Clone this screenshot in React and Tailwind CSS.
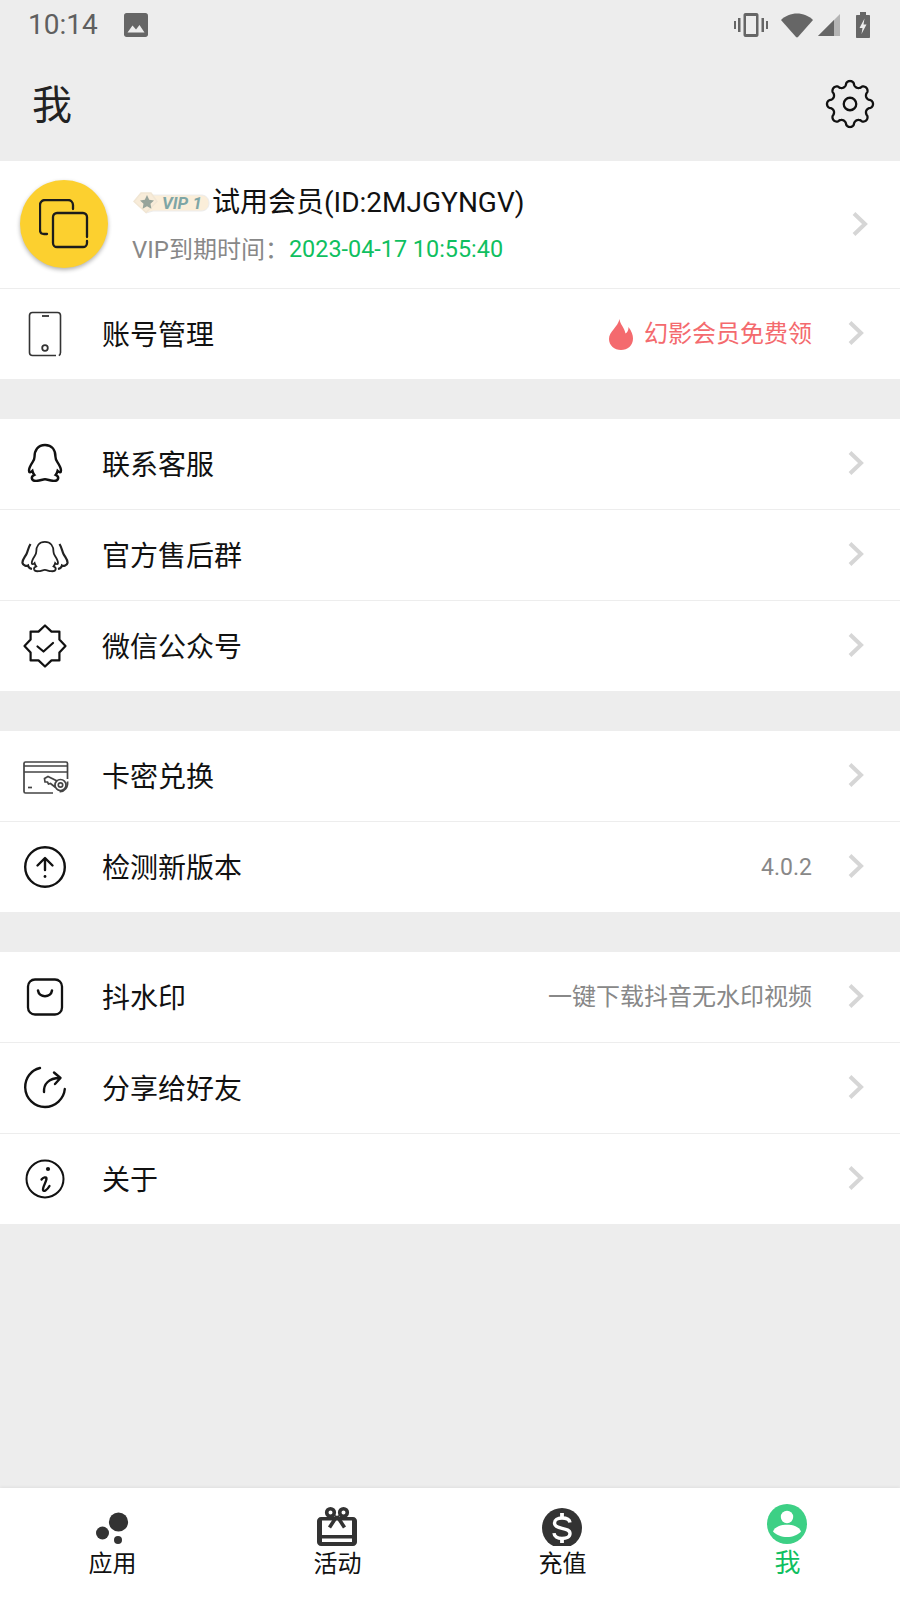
import React from "react";

// gear outline, scalloped edge
const gearPath = (() => {
  const pts = [];
  for (let i = 0; i < 240; i++) {
    const a = (i / 240) * Math.PI * 2;
    const wave = Math.cos(8 * a);
    const r = 19.5 + 2.6 * Math.sign(wave) * Math.pow(Math.abs(wave), 0.6);
    pts.push(`${(24 + r * Math.sin(a)).toFixed(2)} ${(24 - r * Math.cos(a)).toFixed(2)}`);
  }
  return "M" + pts.join("L") + "Z";
})();

const Chevron = ({ className }) => (
  <svg width="16" height="24" viewBox="0 0 16 24" className={className} fill="none" stroke="#d6d6d6" strokeWidth="4">
    <path d="M2 1.5 L13 12 L2 22.5" />
  </svg>
);

const penguin =
  "M24 6.5C16.8 6.5 13.5 12 13.5 18.5C13.5 20.6 13 21.6 11.6 23.7C9.6 26.7 8 29.6 8 32.2C8 34.2 9.4 34.4 11.4 32.4C11.8 34 12.4 35.2 13.4 36.4C11.6 37.2 10.6 38.2 10.8 39.8C11.1 41.8 13.6 42.6 16.5 42.3C19.5 42 21.6 40.8 24 40.8C26.4 40.8 28.5 42 31.5 42.3C34.4 42.6 36.9 41.8 37.2 39.8C37.4 38.2 36.4 37.2 34.6 36.4C35.6 35.2 36.2 34 36.6 32.4C38.6 34.4 40 34.2 40 32.2C40 29.6 38.4 26.7 36.4 23.7C35 21.6 34.5 20.6 34.5 18.5C34.5 12 31.2 6.5 24 6.5Z";

const IconPhone = () => (
  <svg width="48" height="48" viewBox="0 0 48 48" fill="none" stroke="#333" strokeWidth="1.6">
    <path d="M35 45.5H11.5C9.5 45.5 8.5 44.5 8.5 42.5V5.5C8.5 3.5 9.5 2.5 11.5 2.5H36.5C38.5 2.5 39.5 3.5 39.5 5.5V42.5C39.5 44 39 45 37.8 45.6" />
    <path d="M21 6H28" strokeWidth="1.8" />
    <circle cx="24" cy="38" r="2.8" strokeWidth="1.8" />
  </svg>
);

const IconQQ = () => (
  <svg width="48" height="48" viewBox="0 0 48 48" fill="none" stroke="#111" strokeWidth="2.4">
    <path d={penguin} transform="translate(0 -1.5)" />
  </svg>
);

const IconGroup = () => (
  <svg width="48" height="48" viewBox="0 0 48 48" fill="none" stroke="#222" strokeWidth="2.2">
    <path d={penguin} transform="translate(4.2 5.5) scale(.82)" />
    <path d="M9.5 13C7 17 7 20 5.5 23C4 26 1 29 1.5 32C2 35 6 35 7 34.5C7.5 37 8.5 37.5 11 38" />
    <path d="M38.5 13C41 17 41 20 42.5 23C44 26 47 29 46.5 32C46 35 42 35 41 34.5C40.5 37 39.5 37.5 37 38" />
  </svg>
);

const IconBadge = () => (
  <svg width="48" height="48" viewBox="0 0 48 48" fill="none" stroke="#111" strokeWidth="2.2">
    <path d="M24 3.5L30.5 9.6H38.4V17.5L44.5 24L38.4 30.5V38.4H30.5L24 44.5L17.5 38.4H9.6V30.5L3.5 24L9.6 17.5V9.6H17.5Z" strokeLinejoin="round" />
    <path d="M16.5 24.5L22.5 29.5L32 21" strokeLinecap="round" strokeLinejoin="round" />
  </svg>
);

const IconCard = () => (
  <svg width="48" height="48" viewBox="0 0 48 48" fill="none" stroke="#444" strokeWidth="1.7" className="overflow-visible">
    <g transform="translate(0 2)">
      <path d="M32 39H4.5C3.5 39 3 38.5 3 37.5V9.5C3 8.5 3.5 8 4.5 8H45C46 8 46.5 8.5 46.5 9.5V25" />
      <path d="M3 12H46.5M3 18H46.5" />
      <path d="M7 33.5H11" />
      <path d="M23.5 24.5L27 22.5L36 27L34 33L29.5 29.5L27.5 30L26.5 28L24 28Z" fill="#fff" />
      <circle cx="39.5" cy="31" r="5.5" fill="#fff" />
      <circle cx="39.5" cy="31" r="2.2" />
      <path d="M46.5 27.5C47.5 33 43.5 38 38.5 37.5" />
    </g>
  </svg>
);

const IconUpgrade = () => (
  <svg width="48" height="48" viewBox="0 0 48 48" fill="none" stroke="#111" strokeWidth="2.4">
    <circle cx="24" cy="24" r="19.8" />
    <path d="M16.5 22.5L24 15L31.5 22.5M24 15.5V27" strokeLinecap="round" strokeLinejoin="round" />
    <circle cx="24" cy="33.5" r="1.4" fill="#111" stroke="none" />
  </svg>
);

const IconBag = () => (
  <svg width="48" height="48" viewBox="0 0 48 48" fill="none" stroke="#111" strokeWidth="2.3">
    <rect x="7" y="6.5" width="34" height="35" rx="7" />
    <path d="M17 17.5C18 25 30 25 31 17.5" strokeWidth="2.5" strokeLinecap="round" />
  </svg>
);

const IconShare = () => (
  <svg width="48" height="48" viewBox="0 0 48 48" fill="none" stroke="#111" strokeWidth="2.4">
    <path d="M19 4C10 6 4 14 4.2 23.5C4.5 34.5 13.5 43 24 43C34.5 43 43 34.5 43.8 25" strokeLinecap="round" />
    <path d="M23 28C22.5 20 28 14 38.5 14M33 8.5L39.5 14L34 20" strokeLinecap="round" strokeLinejoin="round" />
  </svg>
);

const IconInfo = () => (
  <svg width="48" height="48" viewBox="0 0 48 48" fill="none" stroke="#111">
    <circle cx="24" cy="24" r="18.5" strokeWidth="2" />
    <circle cx="27" cy="14" r="2.1" fill="#111" stroke="none" />
    <path d="M20.5 24.5C22 22.5 25.8 21 25.5 24C25 27.5 21.5 32 22 35C22.5 37 26 35.5 28.5 31" strokeWidth="2.3" strokeLinecap="round" />
  </svg>
);

const IconFlame = () => (
  <svg width="24" height="31" viewBox="0 0 24 31" fill="#f46a6e">
    <path d="M10.5 0C11 5.5 15.5 8.5 16.5 14.5C18.5 13.5 19.5 11 19.5 8C22.5 12 24 16 24 19.5C24 26.5 18.5 31 12 31C5.5 31 0 26.5 0 20C0 12.5 9 8 10.5 0Z" />
  </svg>
);

const NavApps = () => (
  <svg width="44" height="44" viewBox="0 0 44 44" fill="#333">
    <circle cx="28.5" cy="20" r="9.6" />
    <circle cx="12.5" cy="31" r="6.5" />
    <circle cx="28" cy="38" r="4" />
  </svg>
);

const NavGift = () => (
  <svg width="44" height="44" viewBox="0 0 44 44">
    <path d="M6 15C3.8 15 2 16.8 2 19V40C2 42.2 3.8 44 6 44H38C40.2 44 42 42.2 42 40V19C42 16.8 40.2 15 38 15Z" fill="#333" />
    <rect x="7" y="18.5" width="30" height="14.5" fill="#fff" />
    <rect x="7" y="36.5" width="30" height="3.5" fill="#fff" />
    <g fill="none" stroke="#333" strokeWidth="3.6">
      <circle cx="15.5" cy="10.5" r="3.8" />
      <circle cx="28.5" cy="10.5" r="3.8" />
      <path d="M22 14L14.5 25.5M22 14L29.5 25.5" />
    </g>
  </svg>
);

const NavCoin = () => (
  <svg width="44" height="44" viewBox="0 0 44 44">
    <circle cx="22" cy="26" r="20" fill="#333" />
    <path d="M30 20.5C29.5 17.5 26 16 22 16C17.5 16 14.5 18 14.5 21C14.5 24.5 18 25.5 22 26.3C26.5 27.2 30 28 30 31.5C30 34.8 26.5 36.5 22 36.5C17.5 36.5 14.2 34.5 14 31.2" fill="none" stroke="#fff" strokeWidth="3.4" />
    <path d="M22 11V17M22 35.5V41" stroke="#fff" strokeWidth="3.8" />
  </svg>
);

const NavMe = () => (
  <svg width="44" height="44" viewBox="0 0 44 44">
    <circle cx="22" cy="22" r="20" fill="#3dd085" />
    <circle cx="22" cy="15" r="6.2" fill="#fff" />
    <path d="M8 29.5C10 24.5 16 22.8 22 22.8C28 22.8 34 24.5 36 29.5C33 33 27.5 35 22 35C16.5 35 11 33 8 29.5Z" fill="#fff" />
  </svg>
);

const VipBadge = () => (
  <svg width="77" height="24" viewBox="0 0 77 24" className="shrink-0">
    <path d="M14 4H68C73 4 76 7.5 76 12C76 16.5 73 20 68 20H20L13 22Z" fill="#fbeed9" stroke="#ececec" strokeWidth="1" />
    <path d="M8 2H18L24 10.5L13 21.5L1 10.5Z" fill="#f8ecd9" stroke="#f1e6d4" strokeWidth="1.5" />
    <path d="M14 4L16.2 8.8L21 9.4L17.5 12.8L18.4 17.8L14 15.2L9.6 17.8L10.5 12.8L7 9.4L11.8 8.8Z" fill="#97a49b" />
    <text x="29" y="18" fontFamily="Roboto, sans-serif" fontSize="17" fontWeight="700" fontStyle="italic" fill="#7ea6a6">VIP 1</text>
  </svg>
);

const sections = [
  [{ label: "联系客服", Icon: IconQQ }, { label: "官方售后群", Icon: IconGroup }, { label: "微信公众号", Icon: IconBadge }],
  [
    { label: "卡密兑换", Icon: IconCard },
    { label: "检测新版本", Icon: IconUpgrade, note: "4.0.2", noteClass: "pt-[1px] text-[23px]" },
  ],
  [
    { label: "抖水印", Icon: IconBag, note: "一键下载抖音无水印视频", noteClass: "text-[24px]" },
    { label: "分享给好友", Icon: IconShare },
    { label: "关于", Icon: IconInfo },
  ],
];

const tabs = [
  { label: "应用", Icon: NavApps },
  { label: "活动", Icon: NavGift },
  { label: "充值", Icon: NavCoin },
  { label: "我", Icon: NavMe, active: true },
];

function Row({ label, Icon, note, noteClass, children, divided }) {
  return (
    <div className={`flex items-center pl-[21px] pr-[36px] ${divided ? "h-[91px] border-t border-[#ededed]" : "h-[90px]"}`}>
      <Icon />
      <span className="ml-[33px] pt-[3px] text-[28px] leading-none text-[#111]">{label}</span>
      <div className="ml-auto flex items-center">
        {children}
        {note && <span className={`leading-none text-[#888] ${noteClass}`}>{note}</span>}
        <Chevron className="mb-[3px] ml-[36px]" />
      </div>
    </div>
  );
}

export default function App() {
  return (
    <div
      className="flex h-[1600px] w-[900px] flex-col overflow-hidden bg-[#ededed]"
      style={{ fontFamily: 'Roboto, "Noto Sans CJK SC", sans-serif' }}
    >
      {/* status bar */}
      <div className="flex h-[50px] items-center pl-[28px] pr-[30px] text-[#5f5f5f]">
        <span className="text-[28px] leading-none">10:14</span>
        <svg width="24" height="24" viewBox="0 0 24 24" fill="#666" className="ml-[26px]">
          <path d="M2.5 0H21.5C22.9 0 24 1.1 24 2.5V21.5C24 22.9 22.9 24 21.5 24H2.5C1.1 24 0 22.9 0 21.5V2.5C0 1.1 1.1 0 2.5 0Z" />
          <path d="M3.5 19.5L8.5 12.5L12 16.5L15.5 12L20.5 19.5Z" fill="#ededed" />
        </svg>
        <div className="ml-auto flex items-center">
          <svg width="34" height="24" viewBox="0 0 34 24" fill="#666">
            <path d="M0 8H2V16H0ZM4 5H6.5V19H4ZM27.5 5H30V19H27.5ZM32 8H34V16H32Z" />
            <path d="M11.5 0H22.5C23.6 0 24.5 .9 24.5 2V22C24.5 23.1 23.6 24 22.5 24H11.5C10.4 24 9.5 23.1 9.5 22V2C9.5 .9 10.4 0 11.5 0ZM12 3V21H22V3Z" fillRule="evenodd" />
          </svg>
          <svg width="32" height="25" viewBox="0 0 32 25" fill="#666" className="ml-[13px]">
            <path d="M0 7C4 3 10 .5 16 .5C22 .5 28 3 32 7L17 24C16.4 24.6 15.6 24.6 15 24Z" />
          </svg>
          <svg width="22" height="22" viewBox="0 0 22 22" className="ml-[5px]">
            <path d="M22 0V22H0Z" fill="#b4b4b4" />
            <path d="M16 6V22H0Z" fill="#666" />
          </svg>
          <svg width="14" height="26" viewBox="0 0 14 26" className="ml-[16px]">
            <path d="M4 0H10V3H13C13.6 3 14 3.4 14 4V25C14 25.6 13.6 26 13 26H1C.4 26 0 25.6 0 25V4C0 3.4 .4 3 1 3H4Z" fill="#666" />
            <path d="M8.5 6.5L3.5 16H6.5L5.5 22L10.5 12.5H7.5Z" fill="#ededed" />
          </svg>
        </div>
      </div>

      {/* title */}
      <div className="flex h-[111px] items-center justify-between pl-[32px] pr-[25px]">
        <span className="text-[40px] leading-none text-[#222]">我</span>
        <svg width="50" height="50" viewBox="0 0 48 48" fill="none" stroke="#111" strokeWidth="2.2" strokeLinejoin="round" className="-mt-[4px]">
          <path d={gearPath} />
          <circle cx="24" cy="24" r="6" />
        </svg>
      </div>

      {/* profile */}
      <div className="bg-white">
        <div className="flex h-[127px] items-center pl-[20px] pr-[32px]">
          <div className="mb-[2px] flex h-[88px] w-[88px] items-center justify-center rounded-full bg-[#fcd02f] shadow-[0_2px_4px_rgba(0,0,0,0.3)]">
            <svg width="50" height="50" viewBox="0 0 50 50" fill="none" stroke="#1c1c1c" strokeWidth="2.3" strokeLinecap="round">
              <path d="M1 31V6C1 3.2 3.2 1 6 1H29C31.8 1 34 3.2 34 6V10" />
              <path d="M1 31C1 33.5 2.5 35 5 35H8" />
              <path d="M48 38V18C48 15.8 46.2 14 44 14H18C15.8 14 14 15.8 14 18V44C14 46.2 15.8 48 18 48H44C46.2 48 48 46.2 48 44V42" />
            </svg>
          </div>
          <div className="ml-[25px] flex flex-col">
            <div className="-mt-[4px] flex h-[40px] items-center">
              <VipBadge />
              <span className="ml-[2px] text-[28px] leading-none text-[#111]">试用会员(ID:2MJGYNGV)</span>
            </div>
            <div className="mt-[15px] flex items-center leading-none">
              <span className="-ml-[1px] text-[24px] text-[#888]">VIP到期时间：</span>
              <span className="text-[23.4px] text-[#0fbf60]">2023-04-17 10:55:40</span>
            </div>
          </div>
          <Chevron className="mb-[2px] ml-auto" />
        </div>
        <div className="border-t border-[#ededed]">
          <Row label="账号管理" Icon={IconPhone}>
            <IconFlame />
            <span className="ml-[11px] text-[24px] leading-none text-[#f46a6e]">幻影会员免费领</span>
          </Row>
        </div>
      </div>

      {sections.map((rows) => (
        <div key={rows[0].label} className="mt-[40px] bg-white">
          {rows.map((row, i) => (
            <Row key={row.label} {...row} divided={i > 0} />
          ))}
        </div>
      ))}

      {/* bottom tabs */}
      <div className="mt-auto grid h-[112px] grid-cols-4 bg-white shadow-[0_-1px_3px_rgba(0,0,0,0.06)]">
        {tabs.map(({ label, Icon, active }) => (
          <div key={label} className="flex flex-col items-center pr-[2px] pt-[14px]">
            <Icon />
            <span className={`ml-[2px] leading-none ${active ? "mt-[4px] text-[26px] text-[#0fbf60]" : "mt-[6px] text-[24px] text-[#111]"}`}>{label}</span>
          </div>
        ))}
      </div>
    </div>
  );
}
